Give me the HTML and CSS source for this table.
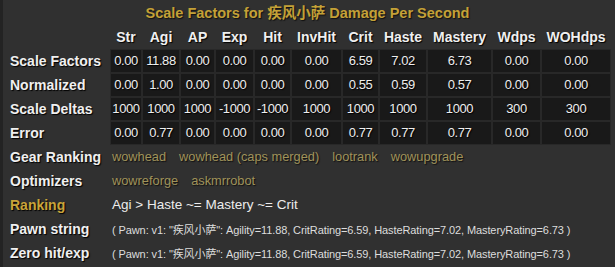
FILE: index.html
```html
<!DOCTYPE html>
<html>
<head>
<meta charset="utf-8">
<link rel="stylesheet" href="styles.css">
</head>
<body>
<div class="panel">
  <div class="title">Scale Factors for 疾风小萨 Damage Per Second</div>
  <div class="grid">
    <div class="hd"></div>
    <div class="hd">Str</div><div class="hd">Agi</div><div class="hd">AP</div><div class="hd">Exp</div><div class="hd">Hit</div><div class="hd">InvHit</div><div class="hd">Crit</div><div class="hd">Haste</div><div class="hd">Mastery</div><div class="hd">Wdps</div><div class="hd">WOHdps</div>

    <div class="lbl">Scale Factors</div>
    <div class="c">0.00</div><div class="c">11.88</div><div class="c">0.00</div><div class="c">0.00</div><div class="c">0.00</div><div class="c">0.00</div><div class="c">6.59</div><div class="c">7.02</div><div class="c">6.73</div><div class="c">0.00</div><div class="c">0.00</div>

    <div class="lbl">Normalized</div>
    <div class="c">0.00</div><div class="c">1.00</div><div class="c">0.00</div><div class="c">0.00</div><div class="c">0.00</div><div class="c">0.00</div><div class="c">0.55</div><div class="c">0.59</div><div class="c">0.57</div><div class="c">0.00</div><div class="c">0.00</div>

    <div class="lbl">Scale Deltas</div>
    <div class="c">1000</div><div class="c">1000</div><div class="c">1000</div><div class="c">-1000</div><div class="c">-1000</div><div class="c">1000</div><div class="c">1000</div><div class="c">1000</div><div class="c">1000</div><div class="c">300</div><div class="c">300</div>

    <div class="lbl">Error</div>
    <div class="c">0.00</div><div class="c">0.77</div><div class="c">0.00</div><div class="c">0.00</div><div class="c">0.00</div><div class="c">0.00</div><div class="c">0.77</div><div class="c">0.77</div><div class="c">0.77</div><div class="c">0.00</div><div class="c">0.00</div>

    <div class="lbl">Gear Ranking</div>
    <div class="span links"><a>wowhead</a><a>wowhead (caps merged)</a><a>lootrank</a><a>wowupgrade</a></div>

    <div class="lbl">Optimizers</div>
    <div class="span links"><a>wowreforge</a><a>askmrrobot</a></div>

    <div class="lbl gold">Ranking</div>
    <div class="span rank">Agi &gt; Haste ~= Mastery ~= Crit</div>

    <div class="lbl">Pawn string</div>
    <div class="span pawn">( Pawn: v1: "<span class="cjk">疾风小萨</span>": Agility=11.88, CritRating=6.59, HasteRating=7.02, MasteryRating=6.73 )</div>

    <div class="lbl">Zero hit/exp</div>
    <div class="span pawn">( Pawn: v1: "<span class="cjk">疾风小萨</span>": Agility=11.88, CritRating=6.59, HasteRating=7.02, MasteryRating=6.73 )</div>
  </div>
</div>
</body>
</html>
```
FILE: styles.css
```css
html, body {
  margin: 0;
  padding: 0;
  background: #303030;
}
body {
  width: 615px;
  height: 267px;
  overflow: hidden;
  font-family: "Liberation Sans", Arial, "Noto Sans CJK SC", sans-serif;
  color: #f0f0f0;
}
.panel {
  height: 267px;
  box-sizing: border-box;
  border-left: 3px solid #232323;
  padding-top: 3px;
}
.title {
  height: 20px;
  line-height: 20px;
  text-align: center;
  font-size: 14.5px;
  font-weight: bold;
  color: #c4a137;
  text-shadow: 1px 1px 1px #111;
  margin-left: -3px;
  margin-bottom: 3px;
}
.grid {
  display: grid;
  grid-template-columns: 101px 30px 36px 33px 37px 35px 49px 35px 46px 63px 47px 68px;
  grid-auto-rows: 22px;
  gap: 2px;
  padding-left: 5px;
}
.hd {
  font-weight: bold;
  font-size: 14px;
  line-height: 22px;
  text-align: center;
  text-shadow: 1px 1px 1px #000;
  white-space: nowrap;
}
.lbl {
  font-weight: bold;
  font-size: 14px;
  line-height: 22px;
  padding-left: 2px;
  white-space: nowrap;
  text-shadow: 1px 1px 1px #000;
}
.lbl.gold {
  color: #c9a43a;
}
.c {
  background: #191919;
  box-shadow: 0 0 0 1px #282828;
  font-size: 13px;
  letter-spacing: -0.4px;
  line-height: 22px;
  text-align: center;
  color: #eeeeee;
  text-shadow: 1px 1px 1px #000;
  white-space: nowrap;
}
.span {
  grid-column: 2 / -1;
  line-height: 22px;
  white-space: nowrap;
  padding-left: 1px;
}
.links {
  display: flex;
  gap: 13px;
  font-size: 12.8px;
}
.links a {
  color: #a0935a;
  text-shadow: 1px 1px 1px #111;
}
.rank {
  font-size: 13.5px;
  color: #ececec;
}
.pawn {
  font-size: 11px;
  letter-spacing: -0.1px;
  color: #dddddd;
}
.cjk {
  font-family: "Noto Sans CJK SC", sans-serif;
  font-weight: normal;
}
```
